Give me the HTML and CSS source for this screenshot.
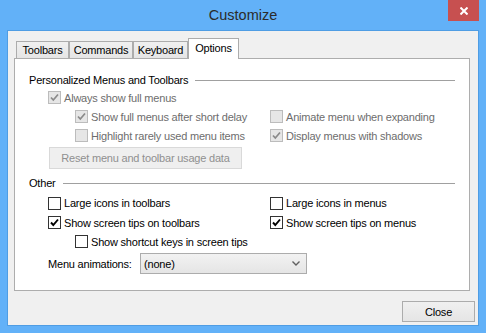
FILE: index.html
```html
<!DOCTYPE html>
<html>
<head>
<meta charset="utf-8">
<link rel="stylesheet" href="styles.css">
</head>
<body>
<div class="window">
  <div class="titlebar">
    <div class="title">Customize</div>
    <div class="close-x">
      <svg width="8" height="8" viewBox="0 0 8 8"><path d="M0.5 0.5 L7.5 7.5 M7.5 0.5 L0.5 7.5" stroke="#fff" stroke-width="2" fill="none"/></svg>
    </div>
  </div>
  <div class="client">
    <div class="tabs">
      <div class="tab w1">Toolbars</div>
      <div class="tab w2">Commands</div>
      <div class="tab w3">Keyboard</div>
      <div class="tab active w4">Options</div>
    </div>
    <div class="panel">
      <div class="group-head first"><span>Personalized Menus and Toolbars</span><i class="rule"></i></div>
      <div class="row">
        <div class="cell lv1"><span class="cb dis"><svg width="11" height="11" viewBox="0 0 11 11"><path d="M2 5.5 L4.3 8 L9 2.5" stroke="currentColor" stroke-width="1.7" fill="none"/></svg></span><span class="lbl dis">Always show full menus</span></div>
      </div>
      <div class="row">
        <div class="cell lv2 left"><span class="cb dis"><svg width="11" height="11" viewBox="0 0 11 11"><path d="M2 5.5 L4.3 8 L9 2.5" stroke="currentColor" stroke-width="1.7" fill="none"/></svg></span><span class="lbl dis">Show full menus after short delay</span></div>
        <div class="cell"><span class="cb dis"></span><span class="lbl dis">Animate menu when expanding</span></div>
      </div>
      <div class="row">
        <div class="cell lv2 left"><span class="cb dis"></span><span class="lbl dis">Highlight rarely used menu items</span></div>
        <div class="cell"><span class="cb dis"><svg width="11" height="11" viewBox="0 0 11 11"><path d="M2 5.5 L4.3 8 L9 2.5" stroke="currentColor" stroke-width="1.7" fill="none"/></svg></span><span class="lbl dis">Display menus with shadows</span></div>
      </div>
      <div class="btn reset">Reset menu and toolbar usage data</div>

      <div class="group-head second"><span>Other</span><i class="rule"></i></div>
      <div class="row tall">
        <div class="cell lv1 left"><span class="cb"></span><span class="lbl">Large icons in toolbars</span></div>
        <div class="cell"><span class="cb"></span><span class="lbl">Large icons in menus</span></div>
      </div>
      <div class="row">
        <div class="cell lv1 left"><span class="cb"><svg width="11" height="11" viewBox="0 0 11 11"><path d="M2 5.5 L4.3 8 L9 2.5" stroke="currentColor" stroke-width="1.9" fill="none"/></svg></span><span class="lbl">Show screen tips on toolbars</span></div>
        <div class="cell"><span class="cb"><svg width="11" height="11" viewBox="0 0 11 11"><path d="M2 5.5 L4.3 8 L9 2.5" stroke="currentColor" stroke-width="1.9" fill="none"/></svg></span><span class="lbl">Show screen tips on menus</span></div>
      </div>
      <div class="row short">
        <div class="cell lv2"><span class="cb"></span><span class="lbl">Show shortcut keys in screen tips</span></div>
      </div>
      <div class="anim-row">
        <span class="lbl anim-lbl">Menu animations:</span>
        <div class="select"><span>(none)</span>
          <svg width="8" height="5" viewBox="0 0 8 5"><path d="M0.5 0.5 L4 4 L7.5 0.5" stroke="#606060" stroke-width="1.4" fill="none"/></svg>
        </div>
      </div>
    </div>
    <div class="footer">
      <div class="btn close">Close</div>
    </div>
  </div>
</div>
</body>
</html>
```

FILE: styles.css
```css
* { box-sizing: border-box; }
html, body { margin: 0; padding: 0; }
body {
  font-family: "Liberation Sans", Arial, sans-serif;
  font-size: 11px;
  letter-spacing: -0.2px;
  color: #000;
}
.window {
  width: 486px;
  height: 333px;
  background: #62b1f8;
  display: flex;
  flex-direction: column;
}
.titlebar {
  height: 30px;
  display: grid;
  grid-template-columns: 1fr auto 1fr;
}
.title {
  grid-column: 2;
  font-size: 14.5px;
  letter-spacing: 0;
  line-height: 30px;
  color: #2b2b2b;
}
.close-x {
  grid-column: 3;
  justify-self: end;
  width: 31px;
  height: 21px;
  margin-right: 7px;
  background: #c75050;
  display: flex;
  align-items: center;
  justify-content: center;
  padding-left: 1px;
}
.client {
  margin: 0 7px 7px;
  height: 296px;
  border: 1px solid #4f9de4;
  background: #f0f0f0;
  padding: 7px 3px 3px 6px;
  display: flex;
  flex-direction: column;
}
.tabs {
  display: flex;
  align-items: flex-end;
  height: 20px;
  margin-left: 2px;
}
.tab {
  height: 17px;
  line-height: 16px;
  text-align: center;
  border: 1px solid #acacac;
  border-bottom: none;
  background: linear-gradient(#f0f0f0, #e5e5e5);
}
.w1 { width: 53px; }
.w2 { width: 64px; }
.w3 { width: 55px; }
.w4 { width: 51px; }
.tab.active {
  height: 21px;
  margin-bottom: -1px;
  background: #fff;
  position: relative;
  z-index: 1;
  padding-top: 1px;
}
.panel {
  height: 233px;
  margin-right: 5px;
  border: 1px solid #adadad;
  background: #fff;
  padding: 0 14px 0 14px;
}
.group-head {
  display: flex;
  align-items: center;
  height: 16px;
  line-height: 16px;
  gap: 7px;
}
.group-head.first { margin-top: 13px; }
.group-head.second { margin-top: 6px; }
.rule {
  flex: 1;
  height: 1px;
  background: #a0a0a0;
  margin-top: 1px;
}
.row {
  display: flex;
  align-items: center;
  height: 19px;
}
.row.tall { height: 20px; margin-top: 2px; }
.row.short { height: 19px; }
.cell {
  display: flex;
  align-items: center;
  gap: 3px;
}
.cell.left { width: 241px; }
.lv1 { padding-left: 19px; }
.lv2 { padding-left: 46px; }
.cb {
  width: 13px;
  height: 13px;
  border: 1px solid #333;
  background: #fff;
  color: #000;
  display: flex;
  align-items: center;
  justify-content: center;
  flex: none;
}
.cb.dis {
  border-color: #bcbcbc;
  background: #e6e6e6;
  color: #8a8a8a;
}
.lbl { white-space: nowrap; line-height: 14px; }
.lbl.dis { color: #6d6d6d; }
.btn {
  border: 1px solid #acacac;
  background: linear-gradient(#f0f0f0, #e5e5e5);
  display: flex;
  align-items: center;
  justify-content: center;
}
.btn.reset {
  margin: 2px 0 0 20px;
  width: 193px;
  height: 22px;
  border-color: #d9d9d9;
  background: #efefef;
  color: #8f8f8f;
}
.anim-row {
  display: flex;
  align-items: center;
  margin-top: 2px;
  padding-left: 19px;
}
.anim-lbl { width: 92px; }
.select {
  width: 167px;
  height: 21px;
  border: 1px solid #acacac;
  background: linear-gradient(#f2f2f2, #e5e5e5);
  display: flex;
  align-items: center;
  justify-content: space-between;
  padding: 0 6px 0 3px;
}
.footer {
  display: flex;
  justify-content: flex-end;
  margin-top: 10px;
}
.btn.close {
  width: 73px;
  height: 21px;
}
```
